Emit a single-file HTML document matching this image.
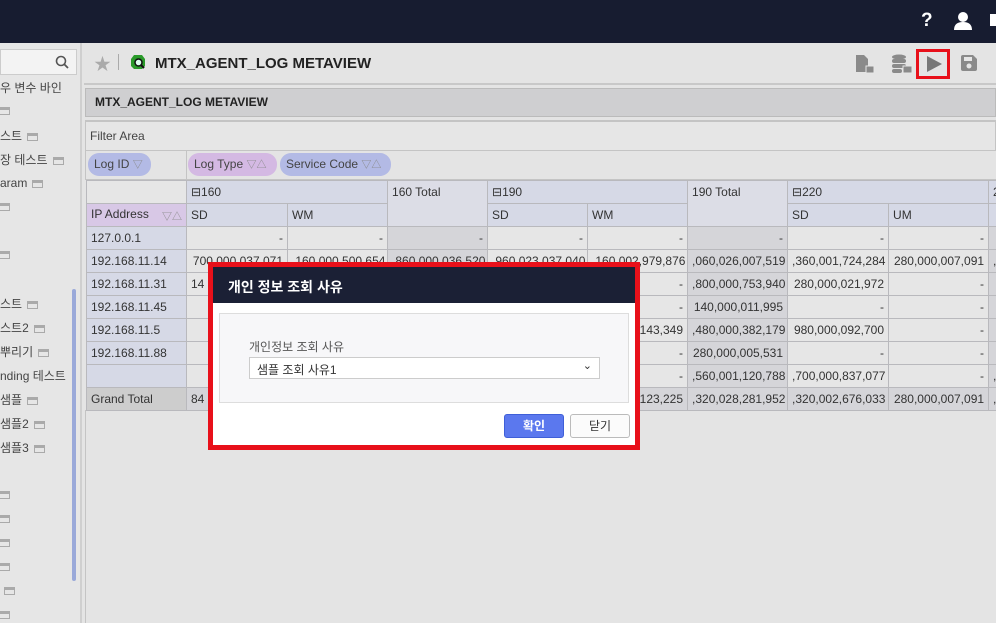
<!DOCTYPE html>
<html><head><meta charset="utf-8"><style>
*{box-sizing:border-box;margin:0;padding:0}
body{width:996px;height:623px;overflow:hidden;background:#e4e4e4;font-family:"Liberation Sans","Noto Sans CJK KR",sans-serif;font-size:12px;color:#333;position:relative}
.a{position:absolute}
#top{left:0;top:0;width:996px;height:43px;background:#171c30}
#side{left:0;top:43px;width:82px;height:580px;background:#e6e6e6;border-right:2px solid #cfcfcf}
.si{position:absolute;left:0;font-size:12px;color:#444;white-space:nowrap}
.ic{display:inline-block;width:11px;height:8px;border:1.5px solid #aaa;border-top-width:3px;vertical-align:middle;margin-left:5px}
table{border-collapse:collapse;table-layout:fixed;position:absolute;left:86px;top:180px;width:931px}
td{border:1px solid #b9b9bd;height:23px;padding:0 4px;font-size:12px;white-space:nowrap;overflow:hidden;text-align:right;background:#e6e6e6;color:#333}
td.h{background:#d6d9e6;text-align:left}
td.t{background:#d5d5d9}
td.g{background:#cdcdcd;text-align:left}
td.gt{background:#d5d5d9}
.pill{position:absolute;height:23px;border-radius:11px;padding:0 6px;line-height:23px;font-size:12px;color:#444;white-space:nowrap}
.f{color:#888;font-size:10px}
</style></head><body>
<div id="top" class="a">
<div class="a" style="left:921px;top:10px;color:#fff;font-weight:bold;font-size:19px">?</div>
<svg class="a" style="left:953px;top:12px" width="20" height="18"><circle cx="10" cy="5" r="5" fill="#fff"/><path d="M1 18 Q1 10 10 10 Q19 10 19 18Z" fill="#fff"/></svg>
<div class="a" style="left:990px;top:14px;width:6px;height:12px;background:#fff"></div>
</div>
<div id="side" class="a">
<div class="a" style="left:0;top:6px;width:77px;height:26px;background:#f3f3f3;border:1px solid #ccc"></div>
<svg class="a" style="left:55px;top:12px" width="14" height="14"><circle cx="6" cy="6" r="4.5" stroke="#555" stroke-width="1.6" fill="none"/><path d="M9.5 9.5L13 13" stroke="#555" stroke-width="1.8"/></svg>
<div class="si" style="top:36px;left:0">우 변수 바인</div>
<div class="si" style="top:60px;left:-6px"><span class="ic"></span></div>
<div class="si" style="top:84px">스트<span class="ic"></span></div>
<div class="si" style="top:108px">장 테스트<span class="ic"></span></div>
<div class="si" style="top:133px">aram<span class="ic"></span></div>
<div class="si" style="top:156px;left:-6px"><span class="ic"></span></div>
<div class="si" style="top:204px;left:-6px"><span class="ic"></span></div>
<div class="si" style="top:252px">스트<span class="ic"></span></div>
<div class="si" style="top:276px">스트2<span class="ic"></span></div>
<div class="si" style="top:300px">뿌리기<span class="ic"></span></div>
<div class="si" style="top:324px">nding 테스트</div>
<div class="si" style="top:348px">샘플<span class="ic"></span></div>
<div class="si" style="top:372px">샘플2<span class="ic"></span></div>
<div class="si" style="top:396px">샘플3<span class="ic"></span></div>
<div class="si" style="top:444px;left:-6px"><span class="ic"></span></div>
<div class="si" style="top:468px;left:-6px"><span class="ic"></span></div>
<div class="si" style="top:492px;left:-6px"><span class="ic"></span></div>
<div class="si" style="top:516px;left:-6px"><span class="ic"></span></div>
<div class="si" style="top:540px;left:-1px"><span class="ic"></span></div>
<div class="si" style="top:564px;left:-6px"><span class="ic"></span></div>
<div class="a" style="left:72px;top:246px;width:4px;height:292px;background:#9aa9d9;border-radius:2px"></div>
</div>
<!-- header -->
<div class="a" style="left:94px;top:50px;color:#aaa;font-size:17px">★</div>
<div class="a" style="left:118px;top:54px;width:1px;height:16px;background:#aaa"></div>
<svg class="a" style="left:130px;top:54px" width="16" height="16"><path d="M4 1h8l3 4v7l-3 3H4L1 12V5z" fill="#2a9a2a"/><circle cx="8.5" cy="8.5" r="3.5" fill="#dfe" stroke="#111" stroke-width="1.5"/><path d="M11 11l3 3" stroke="#111" stroke-width="2"/></svg>
<div class="a" style="left:155px;top:55px;font-size:15px;font-weight:bold;color:#222">MTX_AGENT_LOG METAVIEW</div>
<svg class="a" style="left:855px;top:54px" width="20" height="20"><path d="M1 1h8l4 4v13H1z" fill="#8a8a8a"/><rect x="11" y="12" width="8" height="7" fill="#8a8a8a" stroke="#e6e6e6"/></svg>
<svg class="a" style="left:891px;top:54px" width="22" height="20"><ellipse cx="8" cy="3" rx="7" ry="2.5" fill="#8a8a8a"/><rect x="1" y="5" width="14" height="4" rx="2" fill="#8a8a8a"/><rect x="1" y="10" width="14" height="4" rx="2" fill="#8a8a8a"/><rect x="1" y="15" width="10" height="4" rx="2" fill="#8a8a8a"/><rect x="12" y="12" width="9" height="7" fill="#8a8a8a" stroke="#e6e6e6"/></svg>
<div class="a" style="left:916px;top:49px;width:34px;height:30px;border:3px solid #e8101a"></div>
<svg class="a" style="left:924px;top:54px" width="20" height="20"><path d="M3 2L18 10L3 18Z" fill="#777"/></svg>
<svg class="a" style="left:960px;top:54px" width="18" height="18"><path d="M1 3Q1 1 3 1h10l4 4v10q0 2-2 2H3q-2 0-2-2z" fill="#8a8a8a"/><rect x="4" y="3" width="8" height="4" fill="#e6e6e6"/><circle cx="9" cy="12" r="2.5" fill="#e6e6e6"/></svg>
<div class="a" style="left:84px;top:83px;width:912px;height:2px;background:#c8c8c8"></div>
<!-- panel -->
<div class="a" style="left:85px;top:88px;width:911px;height:29px;background:#cfcfd1;border:1px solid #bbb"></div>
<div class="a" style="left:95px;top:95px;font-size:12px;font-weight:bold;color:#222">MTX_AGENT_LOG METAVIEW</div>
<div class="a" style="left:85px;top:120px;width:911px;height:31px;border:1px solid #c4c4c4;border-top:2px solid #c4c4c4;background:#e6e6e6"></div>
<div class="a" style="left:90px;top:129px;color:#444">Filter Area</div>
<div class="a" style="left:85px;top:150px;width:911px;height:30px;border-bottom:1px solid #c4c4c4;border-left:1px solid #c4c4c4"></div>
<div class="a" style="left:186px;top:150px;width:1px;height:30px;background:#c4c4c4"></div>
<div class="pill" style="left:88px;top:153px;width:63px;background:#b3bae5">Log ID <span class="f">▽</span></div>
<div class="pill" style="left:188px;top:153px;width:89px;background:#d4b9e3">Log Type <span class="f">▽△</span></div>
<div class="pill" style="left:280px;top:153px;width:111px;background:#b3bae5">Service Code <span class="f">▽△</span></div>
<table>
<colgroup><col style="width:100px"><col style="width:101px"><col style="width:100px"><col style="width:100px"><col style="width:100px"><col style="width:100px"><col style="width:100px"><col style="width:101px"><col style="width:100px"><col style="width:29px"></colgroup>
<tr><td style="background:#e6e6e6;height:22px"></td><td class="h" colspan="2">⊟160</td><td class="h" rowspan="2" style="vertical-align:top;padding-top:4px;background:#dcdde6">160 Total</td><td class="h" colspan="2">⊟190</td><td class="h" rowspan="2" style="vertical-align:top;padding-top:4px;background:#dcdde6">190 Total</td><td class="h" colspan="2">⊟220</td><td class="h">2</td></tr>
<tr><td class="h" style="background:#d8c8e6">IP Address <span class="f" style="float:right;margin-top:1px">▽△</span></td><td class="h">SD</td><td class="h">WM</td><td class="h">SD</td><td class="h">WM</td><td class="h">SD</td><td class="h">UM</td><td class="h"></td></tr>
<tr><td class="h">127.0.0.1</td><td>-</td><td>-</td><td class="t">-</td><td>-</td><td>-</td><td class="t">-</td><td>-</td><td>-</td><td class="t"></td></tr>
<tr><td class="h">192.168.11.14</td><td>700,000,037,071</td><td>,160,000,500,654</td><td class="t">,860,000,036,520</td><td>,960,023,037,040</td><td>,160,002,979,876</td><td class="t">,060,026,007,519</td><td>,360,001,724,284</td><td>280,000,007,091</td><td class="t" style="text-align:left">,</td></tr>
<tr><td class="h">192.168.11.31</td><td style="text-align:left">14</td><td></td><td class="t"></td><td></td><td>-</td><td class="t">,800,000,753,940</td><td>280,000,021,972</td><td>-</td><td class="t"></td></tr>
<tr><td class="h">192.168.11.45</td><td></td><td></td><td class="t"></td><td></td><td>-</td><td class="t">140,000,011,995</td><td>-</td><td>-</td><td class="t"></td></tr>
<tr><td class="h">192.168.11.5</td><td></td><td></td><td class="t"></td><td></td><td>,143,349</td><td class="t">,480,000,382,179</td><td>980,000,092,700</td><td>-</td><td class="t"></td></tr>
<tr><td class="h">192.168.11.88</td><td></td><td></td><td class="t"></td><td></td><td>-</td><td class="t">280,000,005,531</td><td>-</td><td>-</td><td class="t"></td></tr>
<tr><td class="h"></td><td></td><td></td><td class="t"></td><td></td><td>-</td><td class="t">,560,001,120,788</td><td>,700,000,837,077</td><td>-</td><td class="t" style="text-align:left">,</td></tr>
<tr><td class="g">Grand Total</td><td class="gt" style="text-align:left">84</td><td class="gt"></td><td class="gt"></td><td class="gt"></td><td class="gt">,123,225</td><td class="gt">,320,028,281,952</td><td class="gt">,320,002,676,033</td><td class="gt">280,000,007,091</td><td class="gt" style="text-align:left">,</td></tr>
</table>
<div class="a" style="left:85px;top:410px;width:1px;height:213px;background:#c4c4c4"></div>
<!-- dialog -->
<div class="a" style="left:208px;top:262px;width:432px;height:188px;border:5px solid #e8101a;background:#fff">
<div class="a" style="left:0;top:0;width:422px;height:36px;background:#1b2035;color:#fff;font-weight:bold;font-size:14px;padding:10px 0 0 15px">개인 정보 조회 사유</div>
<div class="a" style="left:6px;top:46px;width:410px;height:90px;background:#f7f7f9;border:1px solid #ddd"></div>
<div class="a" style="left:36px;top:71px;color:#555;font-size:12px">개인정보 조회 사유</div>
<div class="a" style="left:36px;top:90px;width:351px;height:22px;background:#fff;border:1px solid #ccc;padding:3px 7px;font-size:12px;color:#333">샘플 조회 사유1<span style="position:absolute;right:7px;top:1px;font-size:11px">⌄</span></div>
<div class="a" style="left:291px;top:147px;width:60px;height:24px;background:#5b78ee;border:1px solid #3f5fd8;border-radius:3px;color:#fff;font-weight:bold;text-align:center;line-height:22px">확인</div>
<div class="a" style="left:357px;top:147px;width:60px;height:24px;background:#fbfbfb;border:1px solid #bbb;border-radius:3px;color:#333;text-align:center;line-height:22px">닫기</div>
</div>
</body></html>
